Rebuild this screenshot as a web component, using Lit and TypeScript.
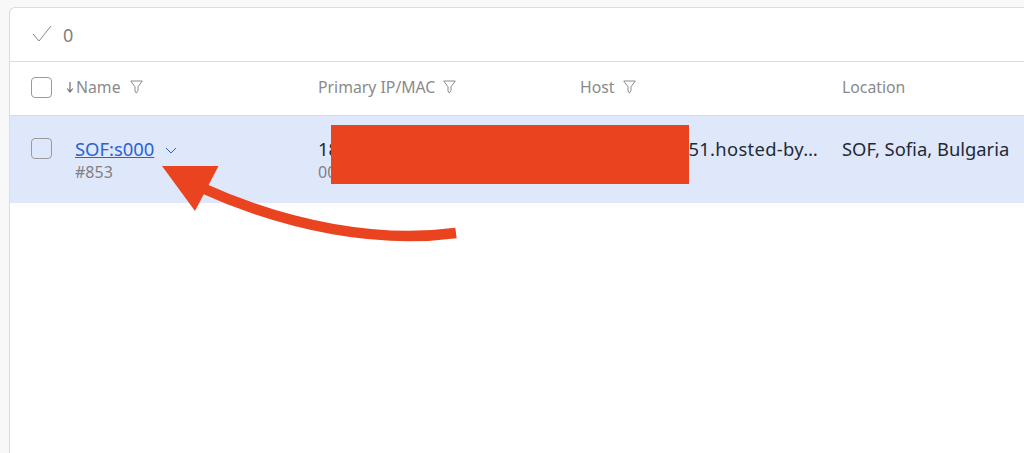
import { LitElement, html, css, svg } from 'lit';
import { customElement } from 'lit/decorators.js';

const filterIcon = html`<svg class="filter" width="13" height="14" viewBox="0 0 13 14" fill="none" stroke="#8a8a8a" stroke-width="1">
  <path d="M.7 1h11.6L8 6.8v3.6L6.6 12.8H6L5 11V6.8z" stroke-linejoin="round" />
</svg>`;

const arrow = svg`<path d="M456 233C380 243 290 228 200 187" fill="none" stroke="#ea4320" stroke-width="10.5" />
  <path d="M162 166L218.5 166L195 211z" fill="#ea4320" />`;

@customElement('app-root')
export class AppRoot extends LitElement {
  static styles = css`
    :host {
      display: block;
      position: relative;
      width: 1024px;
      height: 453px;
      overflow: hidden;
      background: #f8f8f8;
      font-family: 'Noto Sans', sans-serif;
      font-size: 16px;
    }
    .panel {
      margin: 7px 0 0 9px;
      height: 446px;
      box-sizing: border-box;
      background: #fff;
      border: 1px solid #dcdcdc;
      border-right: none;
      border-bottom: none;
      border-top-left-radius: 6px;
    }
    .toolbar {
      display: flex;
      align-items: center;
      gap: 11px;
      height: 53px;
      padding-left: 22px;
      border-bottom: 1px solid #dcdcdc;
      color: #808080;
      font-size: 18px;
    }
    .check-all {
      margin-top: -2px;
    }
    .row {
      display: grid;
      grid-template-columns: 65px 243px 262px 262px 1fr;
    }
    .head {
      height: 53px;
      box-sizing: content-box;
      align-items: center;
      border-bottom: 1px solid #dcdcdc;
      color: #8a8a8a;
      font-size: 15.8px;
    }
    .head > div {
      display: flex;
      align-items: center;
      gap: 8px;
      padding-bottom: 3px;
    }
    .head .name {
      gap: 0;
    }
    .head .name .filter {
      margin-left: 9px;
    }
    .sort {
      margin-left: -9px;
      margin-right: 2px;
    }
    .check {
      width: 21px;
      height: 21px;
      margin-left: 21px;
      box-sizing: border-box;
      border: 1.5px solid #9a9a9a;
      border-radius: 4px;
      background: #fff;
    }
    .body {
      height: 87px;
      background: #dfe8fb;
      color: #1f2a36;
      font-size: 18.4px;
    }
    .body .check {
      margin-top: 22px;
      background: transparent;
    }
    .body .cell {
      padding-top: 20px;
      line-height: 25px;
      white-space: nowrap;
    }
    .sub {
      color: #808080;
      font-size: 16px;
      line-height: 22px;
    }
    a {
      color: #2a62d4;
      text-decoration: underline;
    }
    .chevron {
      margin-left: 6px;
      vertical-align: 2px;
    }
    .host {
      display: block;
      width: 238px;
      text-align: right;
      letter-spacing: 0.3px;
    }
    .overlay {
      position: absolute;
      left: 0;
      top: 0;
    }
    .mask {
      position: absolute;
      left: 331px;
      top: 125px;
      width: 358px;
      height: 59px;
      background: #ea4320;
    }
  `;

  render() {
    return html`
      <div class="panel">
        <div class="toolbar">
          <svg class="check-all" width="20" height="17" viewBox="0 0 20 17" fill="none" stroke="#8a8a8a" stroke-width="1">
            <path d="M1 9l6 7L19 1" />
          </svg>
          <span>0</span>
        </div>
        <div class="row head">
          <div><span class="check"></span></div>
          <div class="name">
            <svg class="sort" width="8" height="12" viewBox="0 0 8 12" fill="none" stroke="#707070" stroke-width="1.2">
              <path d="M4 1v9M1.2 7.5L4 11l2.8-3.5" />
            </svg>
            Name ${filterIcon}
          </div>
          <div>Primary IP/MAC ${filterIcon}</div>
          <div>Host ${filterIcon}</div>
          <div>Location</div>
        </div>
        <div class="row body">
          <div><div class="check"></div></div>
          <div class="cell">
            <a>SOF:s000</a>
            <svg class="chevron" width="12" height="7" viewBox="0 0 12 7" fill="none" stroke="#2a62d4" stroke-width="1">
              <path d="M1 1l5 5 5-5" />
            </svg>
            <div class="sub">#853</div>
          </div>
          <div class="cell">18<div class="sub">00</div></div>
          <div class="cell"><span class="host">51.hosted-by…</span></div>
          <div class="cell">SOF, Sofia, Bulgaria</div>
        </div>
      </div>
      <div class="mask"></div>
      <svg class="overlay" width="1024" height="453" viewBox="0 0 1024 453">${arrow}</svg>
    `;
  }
}
